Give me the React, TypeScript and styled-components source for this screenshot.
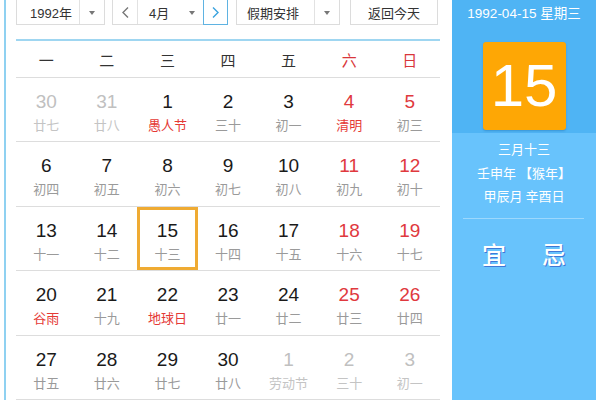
import React from 'react';
import styled, { createGlobalStyle, css } from 'styled-components';

const CJK = `"Noto Sans CJK SC", "Liberation Sans", sans-serif`;
const NUM = `"Liberation Sans", Arial, "Noto Sans CJK SC", sans-serif`;

const GlobalStyle = createGlobalStyle`
  html, body {
    margin: 0;
    padding: 0;
    background: #ffffff;
    overflow: hidden;
  }
  body {
    font-family: ${CJK};
  }
`;

const Page = styled.div`
  display: flex;
  width: 600px;
  height: 400px;
  overflow: hidden;
  padding-left: 4px;
  box-sizing: border-box;
`;

const CalendarPane = styled.div`
  border-left: 2px solid #8fd1f1;
  padding-left: 10px;
  width: 424px;
  display: flex;
  flex-direction: column;
`;

const Toolbar = styled.div`
  display: flex;
  align-items: stretch;
  height: 30px;
  margin-top: -4px;
  margin-bottom: 14px;
`;

const Box = styled.div<{ $width: number; $gap?: number }>`
  display: flex;
  align-items: stretch;
  width: ${({ $width }) => $width}px;
  margin-right: ${({ $gap = 0 }) => $gap}px;
  border: 1px solid #dcdcdc;
  box-sizing: border-box;
  background: #fff;
  font-size: 13px;
  color: #333;
`;

const Label = styled.div<{ $width: number; $pad?: number }>`
  display: flex;
  align-items: center;
  width: ${({ $width }) => $width}px;
  padding-left: ${({ $pad = 0 }) => $pad}px;
  padding-top: 4px;
  box-sizing: border-box;
  font-family: ${NUM};
`;

const ArrowCell = styled.div<{ $divider?: boolean }>`
  flex: 1;
  display: flex;
  align-items: center;
  justify-content: center;
  padding-top: 4px;
  ${({ $divider }) =>
    $divider &&
    css`
      border-left: 1px solid #e2e2e2;
    `}
`;

const Caret = styled.span`
  width: 0;
  height: 0;
  border-left: 3.5px solid transparent;
  border-right: 3.5px solid transparent;
  border-top: 4px solid #777;
`;

const NavButton = styled.div<{ $active?: boolean }>`
  width: 25px;
  display: flex;
  align-items: center;
  justify-content: center;
  padding-top: 4px;
  box-sizing: border-box;
  color: #777;
  ${({ $active }) =>
    $active
      ? css`
          border: 1px solid #5fb3e2;
          margin: -1px -1px -1px 0;
          color: #3ba3de;
        `
      : css`
          border-right: 1px solid #e2e2e2;
        `}
`;

const TodayButton = styled(Box)`
  justify-content: center;
  align-items: center;
  padding-top: 4px;
  font-family: ${CJK};
`;

const Weekdays = styled.div`
  display: grid;
  grid-template-columns: repeat(7, 1fr);
  height: 39px;
  border-top: 2px solid #9fd6f1;
  border-bottom: 1px solid #dddddd;
  box-sizing: border-box;
  padding-top: 2px;
`;

const Weekday = styled.div<{ $weekend?: boolean }>`
  display: flex;
  align-items: center;
  justify-content: center;
  font-size: 15px;
  color: ${({ $weekend }) => ($weekend ? '#d9363a' : '#333')};
`;

const Grid = styled.div`
  display: grid;
  grid-template-columns: repeat(7, 1fr);
  grid-auto-rows: 64.5px;
`;

const Cell = styled.div<{ $selected?: boolean }>`
  display: flex;
  flex-direction: column;
  align-items: center;
  padding-top: 13px;
  box-sizing: border-box;
  border-bottom: 1px solid #dddddd;
  ${({ $selected }) =>
    $selected &&
    css`
      box-shadow: inset 0 0 0 3px #efab33;
    `}
`;

type Tone = 'normal' | 'weekend' | 'other';

const DayNum = styled.div<{ $tone: Tone }>`
  font-family: ${NUM};
  font-size: 19px;
  line-height: 22px;
  color: ${({ $tone }) => ($tone === 'other' ? '#c0c0c0' : $tone === 'weekend' ? '#e0393e' : '#1a1a1a')};
`;

const Lunar = styled.div<{ $holiday?: boolean; $other?: boolean }>`
  font-size: 13px;
  line-height: 20px;
  margin-top: 2px;
  color: ${({ $holiday, $other }) => ($other ? '#c4c4c4' : $holiday ? '#e53935' : '#9a9a9a')};
`;

const SidePanel = styled.div`
  margin-left: 12px;
  width: 144px;
  display: flex;
  flex-direction: column;
  background: #68c3fc;
  color: #fff;
`;

const SideTop = styled.div`
  background: #4fb4f4;
  height: 133px;
  display: flex;
  flex-direction: column;
  align-items: center;
  padding-top: 4px;
  box-sizing: border-box;
`;

const DateLine = styled.div`
  font-family: ${NUM};
  font-size: 13.5px;
  line-height: 20px;
`;

const BigDay = styled.div`
  margin-top: 18px;
  width: 83px;
  height: 88px;
  border-radius: 3px;
  background: #fea705;
  box-shadow: 0 1px 2px rgba(0, 60, 120, 0.25);
  display: flex;
  align-items: center;
  justify-content: center;
  font-family: ${NUM};
  font-size: 60px;
  line-height: 1;
`;

const LunarInfo = styled.div`
  padding-top: 4px;
  display: flex;
  flex-direction: column;
  align-items: center;
  font-size: 13px;
  line-height: 23.5px;
  white-space: pre;
`;

const Separator = styled.div`
  margin: 10px 12px 0 11px;
  height: 1px;
  background: rgba(255, 255, 255, 0.35);
`;

const Advice = styled.div`
  display: flex;
  justify-content: center;
  gap: 36px;
  padding-top: 18px;
  font-size: 24px;
  line-height: 34px;
  font-weight: 500;
  text-shadow: 1px 1px 0 #3f78d6;
`;

const Chevron = ({ dir }: { dir: 'left' | 'right' }) => (
  <svg width="9" height="13" viewBox="0 0 9 13">
    <polyline
      points={dir === 'left' ? '7,1.5 2,6.5 7,11.5' : '2,1.5 7,6.5 2,11.5'}
      fill="none"
      stroke="currentColor"
      strokeWidth="1.4"
    />
  </svg>
);

type Day = { n: number; lunar: string; tone: Tone; holiday?: boolean; selected?: boolean };

const raw: [number, string, boolean?][] = [
  [30, '廿七'], [31, '廿八'], [1, '愚人节', true], [2, '三十'], [3, '初一'], [4, '清明', true], [5, '初三'],
  [6, '初四'], [7, '初五'], [8, '初六'], [9, '初七'], [10, '初八'], [11, '初九'], [12, '初十'],
  [13, '十一'], [14, '十二'], [15, '十三'], [16, '十四'], [17, '十五'], [18, '十六'], [19, '十七'],
  [20, '谷雨', true], [21, '十九'], [22, '地球日', true], [23, '廿一'], [24, '廿二'], [25, '廿三'], [26, '廿四'],
  [27, '廿五'], [28, '廿六'], [29, '廿七'], [30, '廿八'], [1, '劳动节'], [2, '三十'], [3, '初一'],
];

const days: Day[] = raw.map(([n, lunar, holiday], i) => {
  const other = i < 2 || i > 31;
  const weekend = i % 7 >= 5;
  return {
    n,
    lunar,
    holiday,
    tone: other ? 'other' : weekend ? 'weekend' : 'normal',
    selected: i === 16,
  };
});

const weekdays = ['一', '二', '三', '四', '五', '六', '日'];

function App() {
  return (
    <>
      <GlobalStyle />
      <Page>
        <CalendarPane>
          <Toolbar>
            <Box $width={89} $gap={7}>
              <Label $width={62} $pad={13}>1992年</Label>
              <ArrowCell $divider>
                <Caret />
              </ArrowCell>
            </Box>
            <Box $width={116} $gap={8}>
              <NavButton>
                <Chevron dir="left" />
              </NavButton>
              <Label $width={42} $pad={11}>4月</Label>
              <ArrowCell>
                <Caret />
              </ArrowCell>
              <NavButton $active>
                <Chevron dir="right" />
              </NavButton>
            </Box>
            <Box $width={104} $gap={10}>
              <Label $width={77} $pad={10}>假期安排</Label>
              <ArrowCell $divider>
                <Caret />
              </ArrowCell>
            </Box>
            <TodayButton $width={88}>返回今天</TodayButton>
          </Toolbar>
          <Weekdays>
            {weekdays.map((w, i) => (
              <Weekday key={w} $weekend={i >= 5}>
                {w}
              </Weekday>
            ))}
          </Weekdays>
          <Grid>
            {days.map((d, i) => (
              <Cell key={i} $selected={d.selected}>
                <DayNum $tone={d.tone}>{d.n}</DayNum>
                <Lunar $holiday={d.holiday} $other={d.tone === 'other'}>
                  {d.lunar}
                </Lunar>
              </Cell>
            ))}
          </Grid>
        </CalendarPane>
        <SidePanel>
          <SideTop>
            <DateLine>1992-04-15 星期三</DateLine>
            <BigDay>15</BigDay>
          </SideTop>
          <LunarInfo>
            <div>三月十三</div>
            <div>壬申年 【猴年】</div>
            <div>甲辰月 辛酉日</div>
          </LunarInfo>
          <Separator />
          <Advice>
            <span>宜</span>
            <span>忌</span>
          </Advice>
        </SidePanel>
      </Page>
    </>
  );
}

export default App;
